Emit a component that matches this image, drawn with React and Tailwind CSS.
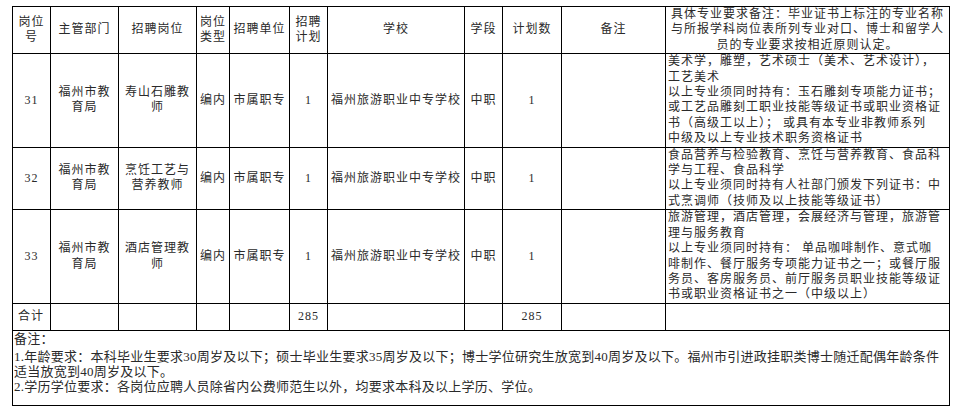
import React from "react";

const FONT = { fontFamily: '"Liberation Serif", "Noto Sans CJK SC", serif' };

const Lines = ({ lines, className = "" }) => (
  <div className={className}>
    {lines.map((l, i) => (
      <div key={i} className="whitespace-nowrap">
        {l}
      </div>
    ))}
  </div>
);

const rows = [
  {
    no: "31",
    dept: ["福州市教", "育局"],
    post: ["寿山石雕教", "师"],
    h: "h-[93px]",
    remark: [
      "美术学，雕塑，艺术硕士（美术、艺术设计），",
      "工艺美术",
      "以上专业须同时持有：玉石雕刻专项能力证书；",
      "或工艺品雕刻工职业技能等级证书或职业资格证",
      "书（高级工以上）；  或具有本专业非教师系列",
      "中级及以上专业技术职务资格证书",
    ],
  },
  {
    no: "32",
    dept: ["福州市教", "育局"],
    post: ["烹饪工艺与", "营养教师"],
    h: "h-[61px]",
    remark: [
      "食品营养与检验教育、烹饪与营养教育、食品科",
      "学与工程、食品科学",
      "以上专业须同时持有人社部门颁发下列证书：中",
      "式烹调师（技师及以上技能等级证书）",
    ],
  },
  {
    no: "33",
    dept: ["福州市教", "育局"],
    post: ["酒店管理教", "师"],
    h: "h-[93px]",
    remark: [
      "旅游管理，酒店管理，会展经济与管理，旅游管",
      "理与服务教育",
      "以上专业须同时持有：  单品咖啡制作、意式咖",
      "啡制作、餐厅服务专项能力证书之一；或餐厅服",
      "务员、客房服务员、前厅服务员职业技能等级证",
      "书或职业资格证书之一（中级以上）",
    ],
  },
];

const td = "border border-black p-0 text-center align-middle";

export default function App() {
  return (
    <div
      className="w-[957px] h-[413px] bg-white pt-[6px] pl-[12px] text-[#2a2a2a] text-[12px] leading-[15.4px] tracking-[1px]"
      style={FONT}
    >
      <table className="table-fixed border-collapse w-[937px]">
        <colgroup>
          <col className="w-[38px]" />
          <col className="w-[68px]" />
          <col className="w-[78px]" />
          <col className="w-[33px]" />
          <col className="w-[60px]" />
          <col className="w-[38px]" />
          <col className="w-[137px]" />
          <col className="w-[38px]" />
          <col className="w-[59px]" />
          <col className="w-[104px]" />
          <col className="w-[284px]" />
        </colgroup>
        <tbody>
          <tr>
            <td className={`${td} h-[46px]`}>
              <Lines lines={["岗位", "号"]} />
            </td>
            <td className={td}>主管部门</td>
            <td className={td}>招聘岗位</td>
            <td className={td}>
              <Lines lines={["岗位", "类型"]} />
            </td>
            <td className={td}>招聘单位</td>
            <td className={td}>
              <Lines lines={["招聘", "计划"]} />
            </td>
            <td className={td}>学校</td>
            <td className={td}>学段</td>
            <td className={td}>计划数</td>
            <td className={td}>备注</td>
            <td className={`${td} px-[2px]`}>
              <Lines
                lines={[
                  "具体专业要求备注：毕业证书上标注的专业名称",
                  "与所报学科岗位表所列专业对口、博士和留学人",
                  "员的专业要求按相近原则认定。",
                ]}
              />
            </td>
          </tr>
          {rows.map((r) => (
            <tr key={r.no}>
              <td className={`${td} ${r.h}`}>{r.no}</td>
              <td className={td}>
                <Lines lines={r.dept} />
              </td>
              <td className={td}>
                <Lines lines={r.post} />
              </td>
              <td className={td}>编内</td>
              <td className={td}>市属职专</td>
              <td className={td}>1</td>
              <td className={td}>福州旅游职业中专学校</td>
              <td className={td}>中职</td>
              <td className={td}>1</td>
              <td className={td}></td>
              <td className={`${td} text-left px-[2px]`}>
                <Lines lines={r.remark} />
              </td>
            </tr>
          ))}
          <tr>
            <td className={`${td} h-[27px] text-left pl-[5px]`}>合计</td>
            <td className={td}></td>
            <td className={td}></td>
            <td className={td}></td>
            <td className={td}></td>
            <td className={td}>285</td>
            <td className={td}></td>
            <td className={td}></td>
            <td className={td}>285</td>
            <td className={td}></td>
            <td className={td}></td>
          </tr>
          <tr>
            <td
              colSpan={11}
              className="border border-black h-[75px] p-0 pl-[1px] text-left align-top text-[13px] leading-[15px] tracking-[0.25px]"
            >
              <div className="whitespace-nowrap">备注：</div>
              <div className="whitespace-nowrap mt-[3px]">
                1.年龄要求：本科毕业生要求30周岁及以下；硕士毕业生要求35周岁及以下；博士学位研究生放宽到40周岁及以下。福州市引进政挂职类博士随迁配偶年龄条件
              </div>
              <div className="whitespace-nowrap">适当放宽到40周岁及以下。</div>
              <div className="whitespace-nowrap">
                2.学历学位要求：各岗位应聘人员除省内公费师范生以外，均要求本科及以上学历、学位。
              </div>
            </td>
          </tr>
        </tbody>
      </table>
    </div>
  );
}
